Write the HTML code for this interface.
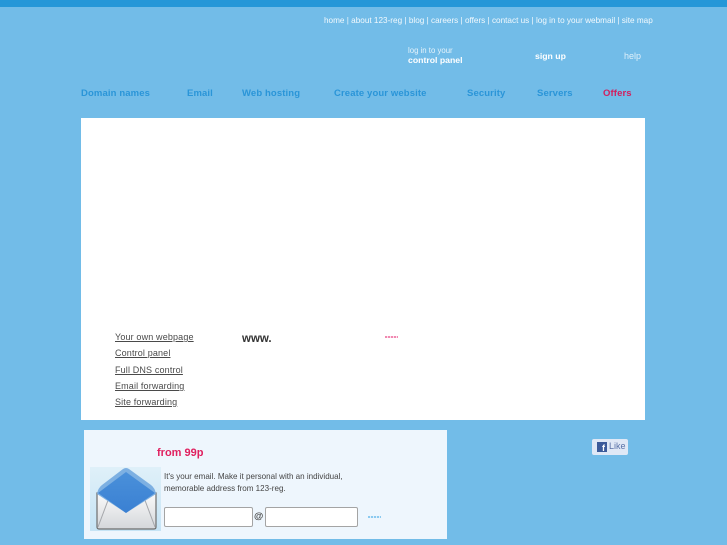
<!DOCTYPE html>
<html><head><meta charset="utf-8"><style>
html,body{margin:0;padding:0;}
body{width:727px;height:545px;overflow:hidden;background:#72bce8;position:relative;font-family:"Liberation Sans",sans-serif;}
#p{position:absolute;left:0;top:0;width:727px;height:545px;filter:blur(.3px);}
.t{position:absolute;white-space:nowrap;line-height:1;}
.n{font-size:9.5px;font-weight:bold;color:#2a95d8;letter-spacing:.12px;top:89px;}
.w{color:#f2f9fd;}
.l{left:115px;font-size:9px;color:#4a4a4a;text-decoration:underline;letter-spacing:.15px;}
.b{position:absolute;background:#fff;border:1.5px solid #a4a4a4;border-radius:2px;box-sizing:border-box;}
.d{position:absolute;width:13px;height:2px;}
</style></head><body><div id="p">
<div style="position:absolute;left:0;top:0;width:727px;height:7px;background:#2597d8"></div>
<div class="t w" style="left:324px;top:17px;font-size:8.2px">home | about 123-reg | blog | careers | offers | contact us | log in to your webmail | site map</div>
<div class="t w" style="left:408px;top:47px;font-size:7.8px;opacity:.9">log in to your</div>
<div class="t" style="left:408px;top:56px;font-size:8.7px;font-weight:bold;color:#fff">control panel</div>
<div class="t" style="left:535px;top:52px;font-size:8.7px;font-weight:bold;color:#fff">sign up</div>
<div class="t w" style="left:624px;top:52px;font-size:9px;opacity:.85">help</div>
<div class="t n" style="left:81px">Domain names</div>
<div class="t n" style="left:187px">Email</div>
<div class="t n" style="left:242px">Web hosting</div>
<div class="t n" style="left:334px">Create your website</div>
<div class="t n" style="left:467px">Security</div>
<div class="t n" style="left:537px">Servers</div>
<div class="t n" style="left:603px;color:#d0205f">Offers</div>
<div style="position:absolute;left:81px;top:118px;width:564px;height:302px;background:#fff"></div>
<div class="t l" style="top:333px">Your own webpage</div>
<div class="t l" style="top:349px">Control panel</div>
<div class="t l" style="top:366px">Full DNS control</div>
<div class="t l" style="top:382px">Email forwarding</div>
<div class="t l" style="top:398px">Site forwarding</div>
<div class="t" style="left:242px;top:334px;font-size:11.5px;font-weight:bold;color:#333">www.</div>
<div class="d" style="left:385px;top:336px;background:repeating-linear-gradient(90deg,#f08ab0 0 2px,#fde 2px 3px)"></div>
<div style="position:absolute;left:84px;top:430px;width:363px;height:109px;background:#eef6fd"></div>
<div class="t" style="left:157px;top:448px;font-size:11px;font-weight:bold;color:#e0205f">from 99p</div>
<svg style="position:absolute;left:90px;top:467px" width="71" height="64" viewBox="0 0 71 64">
<defs>
<linearGradient id="bg" x1="0" y1="0" x2="0" y2="1"><stop offset="0" stop-color="#dff0f9"/><stop offset="1" stop-color="#c6e4f5"/></linearGradient>
<linearGradient id="en" x1="0" y1="0" x2="0" y2="1"><stop offset="0" stop-color="#fafafa"/><stop offset="1" stop-color="#d4d6da"/></linearGradient>
<linearGradient id="fl" x1="0" y1="0" x2="0" y2="1"><stop offset="0" stop-color="#4a90da"/><stop offset="1" stop-color="#3a80d2"/></linearGradient>
</defs>
<rect width="71" height="64" fill="url(#bg)"/>
<path d="M7 26 L66 26 L66 60 Q66 62 64 62 L9 62 Q7 62 7 60Z" fill="url(#en)" stroke="#6e6e6e" stroke-width="1.2"/>
<path d="M8 60 L20 28 M65 60 L53 28" stroke="#a5a7ab" stroke-width="1" fill="none"/>
<path d="M7 27 Q8 21 12 18 L33 2 Q36 0 39 2 L61 18 Q65 21 66 27 L36 46Z" fill="#7db0e2"/>
<path d="M8 26 L36 5 L65 26 L36 46Z" fill="url(#fl)"/>
</svg>
<div class="t" style="left:164px;top:473px;font-size:8.05px;color:#444">It's your email. Make it personal with an individual,</div>
<div class="t" style="left:164px;top:485px;font-size:8.05px;color:#444">memorable address from 123-reg.</div>
<div class="b" style="left:164px;top:507px;width:89px;height:20px"></div>
<div class="t" style="left:254px;top:512px;font-size:9.5px;font-weight:bold;color:#444">@</div>
<div class="b" style="left:265px;top:507px;width:93px;height:20px"></div>
<div class="d" style="left:368px;top:516px;background:repeating-linear-gradient(90deg,#8ccaf0 0 2px,#e0f0fb 2px 3px)"></div>
<div style="position:absolute;left:592px;top:439px;width:36px;height:16px;background:#dfe8f6;border-radius:2px"></div>
<div style="position:absolute;left:597px;top:442px;width:10px;height:10px;background:#3b5a9a"></div>
<div class="t" style="left:602px;top:444px;font-size:9px;font-weight:bold;color:#fff">f</div>
<div class="t" style="left:609px;top:442px;font-size:9px;color:#5a72a8">Like</div>
</div></body></html>
